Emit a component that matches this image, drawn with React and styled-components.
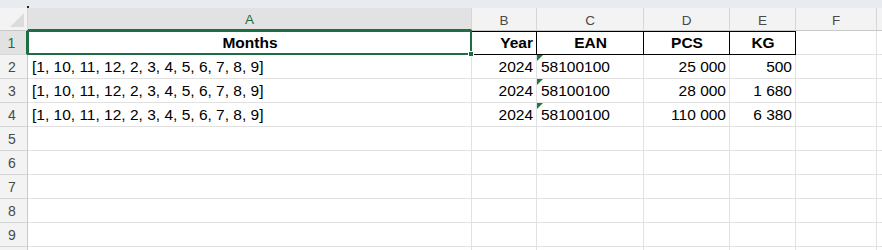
import React from "react";
import styled, { createGlobalStyle, css } from "styled-components";

const GlobalStyle = createGlobalStyle`
  html, body {
    margin: 0;
    padding: 0;
    background: #ffffff;
  }
  * {
    box-sizing: border-box;
  }
`;

const COLS = [
  { key: "A", width: 444 },
  { key: "B", width: 65 },
  { key: "C", width: 107 },
  { key: "D", width: 86 },
  { key: "E", width: 66 },
  { key: "F", width: 81 },
  { key: "G", width: 80, hidden: true },
];

const template = `28px ${COLS.map((c) => c.width + "px").join(" ")}`;

const Sheet = styled.div`
  width: 882px;
  height: 250px;
  overflow: hidden;
  background: #ffffff;
  font-family: "Liberation Sans", Arial, sans-serif;
  font-size: 15.5px;
  color: #000;
`;

const TopStrip = styled.div`
  height: 8px;
  background: #e8ebef;
  position: relative;
`;

const Dot = styled.span`
  position: absolute;
  left: 27px;
  bottom: 0;
  width: 2px;
  height: 2px;
  background: #222;
`;

const Row = styled.div`
  display: grid;
  grid-template-columns: ${template};
  height: ${(p) => (p.$header ? 23 : 24)}px;
`;

const Corner = styled.div`
  position: relative;
  background: #f3f3f3;
  border-right: 1px solid #d6d6d6;
  border-bottom: 1px solid #c8c8c8;
  overflow: hidden;

  &::after {
    content: "";
    position: absolute;
    right: 3px;
    bottom: 3px;
    width: 0;
    height: 0;
    border-left: 14px solid transparent;
    border-bottom: 14px solid #dcdcdc;
  }
`;

const ColHead = styled.div`
  display: flex;
  align-items: center;
  justify-content: center;
  padding-top: 2px;
  background: ${(p) => (p.$active ? "#e2e2e2" : "#f3f3f3")};
  color: ${(p) => (p.$active ? "#1e6e43" : "#4a4a4a")};
  border-right: 1px solid #d6d6d6;
  border-bottom: ${(p) => (p.$active ? "2px solid #1e6e43" : "1px solid #c8c8c8")};
  font-size: 13.5px;
`;

const RowHead = styled.div`
  display: flex;
  align-items: center;
  justify-content: center;
  padding-right: 3px;
  padding-top: 1px;
  background: ${(p) => (p.$active ? "#e2e2e2" : "#f3f3f3")};
  color: ${(p) => (p.$active ? "#1e6e43" : "#4a4a4a")};
  border-right: ${(p) => (p.$active ? "2px solid #1e6e43" : "1px solid #c8c8c8")};
  border-bottom: 1px solid #d6d6d6;
  font-size: 14px;
`;

const Cell = styled.div`
  position: relative;
  display: flex;
  align-items: center;
  padding: 1px 3px 0 4px;
  white-space: nowrap;
  overflow: visible;
  border-right: 1px solid #e1e1e1;
  border-bottom: 1px solid #e1e1e1;
  justify-content: ${(p) =>
    p.$align === "right" ? "flex-end" : p.$align === "center" ? "center" : "flex-start"};
  font-weight: ${(p) => (p.$bold ? 700 : 400)};

  ${(p) =>
    p.$boxed &&
    css`
      border-right: 1px solid #000;
      border-bottom: 1px solid #000;
      box-shadow: inset 0 1px 0 #000;
    `}
`;

const Selection = styled.div`
  position: absolute;
  left: -1px;
  top: -1px;
  right: -1px;
  bottom: -1px;
  border: 2px solid #1e6e43;
  pointer-events: none;
  z-index: 2;
`;

const FillHandle = styled.span`
  position: absolute;
  right: -4px;
  bottom: -4px;
  width: 6px;
  height: 6px;
  background: #1e6e43;
  border: 1px solid #fff;
  z-index: 3;
`;

const TextFlag = styled.span`
  position: absolute;
  left: 0;
  top: 0;
  width: 0;
  height: 0;
  border-top: 6px solid #1f7a3a;
  border-right: 6px solid transparent;
`;

const data = [
  { months: "[1, 10, 11, 12, 2, 3, 4, 5, 6, 7, 8, 9]", year: "2024", ean: "58100100", pcs: "25 000", kg: "500" },
  { months: "[1, 10, 11, 12, 2, 3, 4, 5, 6, 7, 8, 9]", year: "2024", ean: "58100100", pcs: "28 000", kg: "1 680" },
  { months: "[1, 10, 11, 12, 2, 3, 4, 5, 6, 7, 8, 9]", year: "2024", ean: "58100100", pcs: "110 000", kg: "6 380" },
];

const Empty = () => <Cell />;

const App = () => {
  return (
    <Sheet>
      <GlobalStyle />
      <TopStrip>
        <Dot />
      </TopStrip>

      {/* column letters */}
      <Row $header>
        <Corner />
        {COLS.map((c) => (
          <ColHead key={c.key} $active={c.key === "A"}>
            {c.hidden ? null : c.key}
          </ColHead>
        ))}
      </Row>

      {/* header row */}
      <Row>
        <RowHead $active>1</RowHead>
        <Cell $bold $align="center">
          Months
          <Selection>
            <FillHandle />
          </Selection>
        </Cell>
        <Cell $bold $align="right" $boxed>
          Year
        </Cell>
        <Cell $bold $align="center" $boxed>
          EAN
        </Cell>
        <Cell $bold $align="center" $boxed>
          PCS
        </Cell>
        <Cell $bold $align="center" $boxed>
          KG
        </Cell>
        <Empty />
        <Empty />
      </Row>

      {data.map((r, i) => (
        <Row key={i}>
          <RowHead>{i + 2}</RowHead>
          <Cell>{r.months}</Cell>
          <Cell $align="right">{r.year}</Cell>
          <Cell>
            <TextFlag />
            {r.ean}
          </Cell>
          <Cell $align="right">{r.pcs}</Cell>
          <Cell $align="right">{r.kg}</Cell>
          <Empty />
          <Empty />
        </Row>
      ))}

      {[5, 6, 7, 8, 9, 10].map((n) => (
        <Row key={n}>
          <RowHead>{n < 10 ? n : null}</RowHead>
          {COLS.map((c) => (
            <Empty key={c.key} />
          ))}
        </Row>
      ))}
    </Sheet>
  );
};

export default App;
